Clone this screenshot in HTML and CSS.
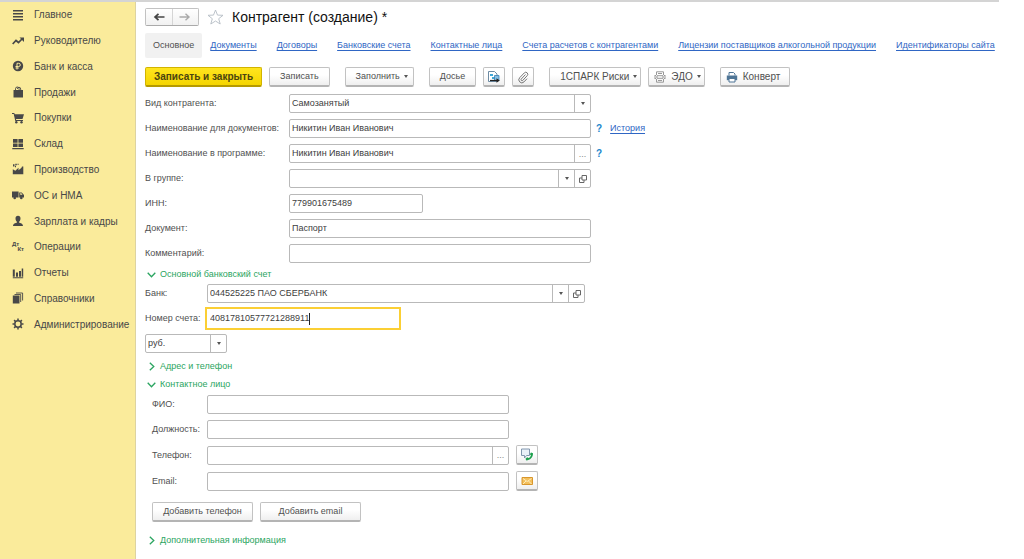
FILE: index.html
```html
<!DOCTYPE html>
<html lang="ru">
<head>
<meta charset="utf-8">
<title>Контрагент (создание)</title>
<link rel="stylesheet" href="styles.css">
</head>
<body>
<svg class="defs" aria-hidden="true">
  <symbol id="open" viewBox="0 0 8 8"><path d="M3 .5h4.500v4.500H3zM3 3H.5v4.500H5V5" fill="none" stroke="#666"/></symbol>
  <symbol id="down" viewBox="0 0 9 6"><path d="M.7.8l3.800 4 3.800-4" fill="none" stroke="#2ba561" stroke-width="1.300"/></symbol>
  <symbol id="right" viewBox="0 0 6 9"><path d="M.8.7l4 3.800-4 3.800" fill="none" stroke="#2ba561" stroke-width="1.300"/></symbol>
</svg>
<div class="topline"></div>
<div class="app">
  <nav class="side">
    <ul class="menu">
      <li><a href="#"><svg viewBox="0 0 12 12"><path d="M1 1h10v1.500H1zM1 4h10v1.500H1zM1 7h10v1.500H1zM1 10h10v1.500H1z"/></svg>Главное</a></li>
      <li><a href="#"><svg viewBox="0 0 12 12"><path d="M.7 9L4 5.500l2.500 2L10 4" fill="none" stroke="#484848" stroke-width="1.700"/><path d="M7.500 2.500H12V7z"/></svg>Руководителю</a></li>
      <li><a href="#"><svg viewBox="0 0 12 12"><circle cx="6" cy="6" r="5.200"/><path d="M5 9.500V3.300h1.700a1.600 1.600 0 010 3.200H3.500M3.500 8h3.300" fill="none" stroke="#faeb9b" stroke-width="1"/></svg>Банк и касса</a></li>
      <li><a href="#"><svg viewBox="0 0 12 12"><path d="M1.500 4h9.500V11.500h-9.500z"/><path d="M3.500 6V2.800a1.800 1.800 0 013.600 0V6M5.300 3a1.700 1.700 0 013.400 0v3" fill="none" stroke="#484848" stroke-width=".9"/></svg>Продажи</a></li>
      <li><a href="#"><svg viewBox="0 0 12 12"><path d="M0 1h2.300l.4 1.200H12L10.500 7H4l.2 1H11v1H3.300L1.700 2H0z"/><circle cx="4.300" cy="10.300" r="1.200"/><circle cx="9.500" cy="10.300" r="1.200"/></svg>Покупки</a></li>
      <li><a href="#"><svg viewBox="0 0 12 12"><path d="M1 1h4.600v3.700H1zM6.400 1H11v3.700H6.400zM1 5.400h4.600V9H1zM6.400 5.400H11V9H6.400zM.3 10h11.400v1.300H.3z"/></svg>Склад</a></li>
      <li><a href="#"><svg viewBox="0 0 12 12"><path d="M.8 11.300V6.200l2.500 1.600 3.200-3v2.400l3-2.400L10 3.500h1.300v7.800zM1 1.200h1.500v2.300H1zM3.300.8h1.500v1.500h-1.500zM3 2.800h1v1.400H3zM5.500.8h1.200v1H5.500z"/></svg>Производство</a></li>
      <li><a href="#"><svg viewBox="0 0 12 12"><path d="M0 2.500h6.600v6H0zM7.200 3.500h2.500L12 6v2.500H7.200z"/><circle cx="2.700" cy="9" r="1.300"/><circle cx="9.300" cy="9" r="1.300"/><path d="M8.200 4.300h1.200l1.100 1.400H8.200z" fill="#faeb9b"/></svg>ОС и НМА</a></li>
      <li><a href="#"><svg viewBox="0 0 12 12"><path d="M6 .8c1.700 0 2.500 1.200 2.500 2.600C8.500 5 7.500 6.400 7 6.700v.8c1.500.6 4 .9 4 3.500H1c0-2.600 2.500-2.900 4-3.500v-.8C4.500 6.400 3.500 5 3.500 3.400 3.500 2 4.300.8 6 .8z"/></svg>Зарплата и кадры</a></li>
      <li><a href="#"><span class="dtkt"><b>Дт</b><b>Кт</b></span>Операции</a></li>
      <li><a href="#"><svg viewBox="0 0 12 12"><path d="M.8 2.500h2v7.300h-2zM4 5.500h2v4.300H4zM7 4h2v5.800H7zM9.700 1.500h1.500v8.300H9.700zM.8 10.200h10.400v1H.8z"/></svg>Отчеты</a></li>
      <li><a href="#"><svg viewBox="0 0 12 12"><path d="M.8 3.500h6.700v8H.8z"/><path d="M2.500 2.500h6.200v7.500M4 1h6.600v7.500" fill="none" stroke="#484848" stroke-width=".9"/></svg>Справочники</a></li>
      <li><a href="#"><svg viewBox="0 0 12 12"><circle cx="6" cy="6" r="3.200" fill="none" stroke="#484848" stroke-width="1.500"/><path d="M6 .5v2M6 9.500v2M.5 6h2M9.500 6h2M2.100 2.100l1.400 1.400M8.500 8.500l1.400 1.400M2.100 9.900l1.400-1.400M8.500 3.500l1.400-1.400" stroke="#484848" stroke-width="1.500"/></svg>Администрирование</a></li>
    </ul>
  </nav>
  <main class="main">
    <header class="head">
      <div class="history">
        <button type="button" aria-label="Назад"><svg viewBox="0 0 11 8"><path d="M11 4H2M5 .8L1.500 4 5 7.200" fill="none" stroke="#444" stroke-width="1.700"/></svg></button>
        <button type="button" aria-label="Вперед"><svg viewBox="0 0 11 8"><path d="M0 4h9M6 .8L9.500 4 6 7.200" fill="none" stroke="#aaa" stroke-width="1.400"/></svg></button>
      </div>
      <svg class="star" viewBox="0 0 17 16"><path d="M8.500 1l2 5.100 5.500.2-4.300 3.400 1.500 5.300-4.700-3-4.700 3 1.500-5.300L1 6.300l5.500-.2z" fill="none" stroke="#b4bcc4" stroke-width=".9"/></svg>
      <h1>Контрагент (создание) *</h1>
    </header>
    <nav class="tabs">
      <span class="current">Основное</span>
      <a href="#">Документы</a>
      <a href="#">Договоры</a>
      <a href="#">Банковские счета</a>
      <a href="#">Контактные лица</a>
      <a href="#">Счета расчетов с контрагентами</a>
      <a href="#">Лицензии поставщиков алкогольной продукции</a>
      <a href="#">Идентификаторы сайта</a>
    </nav>
    <div class="toolbar">
      <div class="group">
        <button type="button" class="btn primary">Записать и закрыть</button>
        <button type="button" class="btn">Записать</button>
      </div>
      <div class="group">
        <button type="button" class="btn drop">Заполнить<i class="caret"></i></button>
      </div>
      <div class="group">
        <button type="button" class="btn">Досье</button>
        <button type="button" class="btn icon" aria-label="Структура подчиненности"><svg viewBox="0 0 14 14"><path d="M1.500 1.500h6l2.500 2.500v7.500H1.500z" fill="#fff" stroke="#6d8ba3"/><path d="M3 4h3v2H3zM5 7h3v2H5z" fill="#3fa7d6"/><path d="M7.500 5.500h4.500v5H7.500z" fill="#86bfe4" stroke="#3a7fb0" stroke-width=".8"/><path d="M3 10.500h7" stroke="#222" stroke-width="1.200"/><path d="M9.500 8.200l3.300 2.300-3.300 2.300z" fill="#222"/></svg></button>
        <button type="button" class="btn icon" aria-label="Присоединенные файлы"><svg viewBox="0 0 14 14"><path d="M9.500 4.500L5.300 9a1 1 0 001.500 1.400l4.400-4.700a2 2 0 00-2.900-2.800L3.700 7.700a3 3 0 004.300 4.200l3-3.200" fill="none" stroke="#777" stroke-width="1"/></svg></button>
      </div>
      <div class="group">
        <button type="button" class="btn drop large">1СПАРК Риски<i class="caret"></i></button>
        <button type="button" class="btn pic drop large"><svg viewBox="0 0 12 12"><path d="M2.500 4V.8h7V4M2.500 8v3.200h7V8M0 6h2.500M9.500 6H12M3 4.700h6v2.600H3zM4 2.500h4M4 9.500h4M.5 4.500h1.500M10 4.500h1.500M.5 7.500h1.500M10 7.500h1.500" fill="none" stroke="#999"/></svg>ЭДО<i class="caret"></i></button>
      </div>
      <div class="group">
        <button type="button" class="btn pic large"><svg viewBox="0 0 12 12"><path d="M3 4.500v-3h4.500L9 3v1.500" fill="#fff" stroke="#4f7596"/><path d="M.8 4.500h10.400v4.700H.8z" fill="#4f7596"/><path d="M3 7.500h6v3.500H3z" fill="#fff" stroke="#4f7596"/></svg>Конверт</button>
      </div>
    </div>
    <form class="form">
      <div class="row">
        <label for="kind">Вид контрагента:</label>
        <div class="field combo"><select id="kind"><option>Самозанятый</option></select><span class="cell arrow"><i class="caret"></i></span></div>
      </div>
      <div class="row">
        <label for="docname">Наименование для документов:</label>
        <div class="field"><input id="docname" type="text" value="Никитин Иван Иванович"></div>
        <div class="extra"><button type="button" class="help">?</button><a href="#">История</a></div>
      </div>
      <div class="row">
        <label for="progname">Наименование в программе:</label>
        <div class="field"><input id="progname" type="text" value="Никитин Иван Иванович"><button type="button" class="cell dots">...</button></div>
        <div class="extra"><button type="button" class="help">?</button></div>
      </div>
      <div class="row">
        <label for="parent">В группе:</label>
        <div class="field"><input id="parent" type="text"><button type="button" class="cell" aria-label="Выбрать группу"><i class="caret"></i></button><button type="button" class="cell" aria-label="Открыть группу"><svg><use href="#open"/></svg></button></div>
      </div>
      <div class="row">
        <label for="inn">ИНН:</label>
        <div class="field short"><input id="inn" type="text" value="779901675489"></div>
      </div>
      <div class="row">
        <label for="doc">Документ:</label>
        <div class="field"><input id="doc" type="text" value="Паспорт"></div>
      </div>
      <div class="row">
        <label for="comment">Комментарий:</label>
        <div class="field"><input id="comment" type="text"></div>
      </div>

      <button type="button" class="section first"><svg class="v"><use href="#down"/></svg>Основной банковский счет</button>
      <div class="row bank">
        <label for="bank">Банк:</label>
        <div class="field"><input id="bank" type="text" value="044525225 ПАО СБЕРБАНК"><button type="button" class="cell" aria-label="Выбрать банк"><i class="caret"></i></button><button type="button" class="cell" aria-label="Открыть банк"><svg><use href="#open"/></svg></button></div>
      </div>
      <div class="row bank">
        <label for="account">Номер счета:</label>
        <div class="field active"><input id="account" type="text" value="40817810577721288911"><span class="cursor"></span></div>
      </div>
      <div class="row currency">
        <div class="field combo"><select aria-label="Валюта"><option>руб.</option></select><span class="cell arrow"><i class="caret"></i></span></div>
      </div>

      <button type="button" class="section"><svg class="h"><use href="#right"/></svg>Адрес и телефон</button>
      <button type="button" class="section"><svg class="v"><use href="#down"/></svg>Контактное лицо</button>
      <div class="contact">
        <div class="row">
          <label for="fio">ФИО:</label>
          <div class="field"><input id="fio" type="text"></div>
        </div>
        <div class="row">
          <label for="post">Должность:</label>
          <div class="field"><input id="post" type="text"></div>
        </div>
        <div class="row tall">
          <label for="phone">Телефон:</label>
          <div class="field"><input id="phone" type="text"><button type="button" class="cell dots">...</button></div>
          <button type="button" class="btn icon" aria-label="Позвонить"><svg viewBox="0 0 14 14"><path d="M1.500 1h8v6.500H6.500L4.500 10V7.500h-3z" fill="#eaf1f8" stroke="#8096ad"/><path d="M11 4.500l2 .8c.3 3.700-3 7.200-6.700 7.200l-.8-1.700 1.700-1.500 1.300.8c1.200-.6 2-1.600 2.400-2.900L9.800 6.300z" fill="#1ea04e"/></svg></button>
        </div>
        <div class="row tall">
          <label for="email">Email:</label>
          <div class="field"><input id="email" type="email"></div>
          <button type="button" class="btn icon" aria-label="Написать письмо"><svg viewBox="0 0 14 14"><path d="M2 3.500h10.500v7H2z" fill="#f3bf5c" stroke="#d8962c"/><path d="M3 4.500l4.200 3 4.300-3M3 10l3-3M11.500 10l-3-3" fill="none" stroke="#fff0c4" stroke-width=".9"/></svg></button>
        </div>
        <div class="adds">
          <button type="button" class="btn">Добавить телефон</button>
          <button type="button" class="btn">Добавить email</button>
        </div>
      </div>
      <button type="button" class="section"><svg class="h"><use href="#right"/></svg>Дополнительная информация</button>
    </form>
  </main>
</div>
</body>
</html>
```
FILE: styles.css
```css
* { box-sizing: border-box; }

body {
  margin: 0;
  min-height: 100vh;
  display: flex;
  flex-direction: column;
  background: #fff;
  color: #505050;
  font: 9px/13px "Liberation Sans", Arial, sans-serif;
}

button, input, select { font: inherit; color: inherit; margin: 0; }
button { cursor: pointer; }
.defs { display: none; }

.topline { height: 2px; margin-right: 25px; background: #d4d4d4; }

.app { flex: 1; display: flex; }

/* sections panel */
.side {
  flex: 0 0 136px;
  background: #faeb9b;
  border-right: 1px solid #ddd3a0;
}
.menu {
  list-style: none;
  margin: 0;
  padding: 0;
  height: 335px;
  display: grid;
  grid-auto-rows: 1fr;
}
.menu li { display: grid; }
.menu a {
  display: flex;
  align-items: center;
  gap: 10px;
  padding-left: 12px;
  color: #484848;
  font-size: 10px;
  text-decoration: none;
  white-space: nowrap;
}
.menu svg { width: 12px; height: 12px; fill: #484848; }
.dtkt {
  width: 12px;
  display: flex;
  flex-direction: column;
  font-size: 6px;
  line-height: 5px;
}
.dtkt b:last-child { align-self: flex-end; }

/* form header */
.main { flex: 1; min-width: 0; padding: 5px 8px 8px 9px; }
.head { display: flex; align-items: center; height: 20px; }
.history { display: flex; width: 54px; height: 18px; border: 1px solid #c2c2c2; border-bottom-color: #aaa; border-radius: 2px; }
.history button {
  flex: 1;
  display: grid;
  place-items: center;
  padding: 0;
  border: 0;
  background: linear-gradient(#fff, #f1f1f1);
}
.history button + button { border-left: 1px solid #d5d5d5; }
.history svg { width: 12px; height: 8px; }
.star { width: 17px; height: 16px; margin: 0 8px; }
h1 { margin: 0; font-size: 14px; line-height: 20px; font-weight: 400; color: #111; white-space: nowrap; }

.tabs { display: flex; align-items: center; gap: 20px; margin-top: 6px; height: 25px; white-space: nowrap; }
.current { padding: 0 8px; line-height: 25px; margin-right: -12px; background: #f1f1f1; border-radius: 2px; }
.tabs a, .extra a { color: #2f66c4; text-decoration: underline; text-underline-offset: 2px; text-decoration-thickness: 1px; }

/* command bar */
.toolbar { display: flex; gap: 15px; margin-top: 9px; }
.group { display: flex; gap: 7px; }
.btn {
  height: 20px;
  display: flex;
  align-items: center;
  justify-content: center;
  padding: 0 10px;
  border: 1px solid #c2c2c2;
  border-bottom: 2px solid #b4b4b4;
  border-radius: 2px;
  background: linear-gradient(#fff 40%, #efefef);
  white-space: nowrap;
}
.btn.primary {
  padding: 0 8px;
  border-color: #d2b400;
  border-bottom-color: #b59a00;
  background: linear-gradient(#ffe51f, #f5d500);
  font-size: 10px;
  font-weight: 700;
  color: #4b4410;
}
.btn.large { font-size: 10px; }
.btn.drop { padding-right: 5px; }
.btn.drop.large { padding-right: 3px; }
.btn.icon { width: 22px; padding: 0; }
.btn.icon svg { width: 14px; height: 14px; }
.btn.pic { padding: 0 9px 0 5px; }
.btn.pic svg { width: 12px; height: 12px; margin-right: 5px; }
.caret { border: 2px solid transparent; border-top: 3px solid #555; border-bottom: 0; }
.btn .caret { margin-left: 4px; }

/* fields */
.form { margin-top: 4px; }
.row {
  display: grid;
  grid-template-columns: 144px minmax(0, 302px) auto;
  align-items: center;
  justify-content: start;
  height: 25px;
}
.row label { white-space: nowrap; }
.field {
  display: flex;
  height: 19px;
  border: 1px solid #b9b9b9;
  border-radius: 2px;
  background: #fff;
  color: #404040;
}
.field input, .field select {
  flex: 1;
  min-width: 0;
  width: 100%;
  padding: 0 2px;
  border: 0;
  outline: 0;
  background: none;
  appearance: none;
}
.field.short { width: 134px; }
.combo { position: relative; }
.cell {
  flex: 0 0 16px;
  display: grid;
  place-items: center;
  padding: 0;
  border: 0;
  border-left: 1px solid #b9b9b9;
  background: none;
}
.cell svg { width: 8px; height: 8px; }
.arrow { position: absolute; top: 0; right: 0; bottom: 0; width: 16px; pointer-events: none; }
.dots { color: #888; line-height: 10px; }
.extra { display: flex; gap: 8px; margin-left: 5px; }
.help { padding: 0; border: 0; background: none; color: #1c86cc; font-size: 10px; font-weight: 700; }

.section {
  display: flex;
  align-items: center;
  height: 15px;
  margin-top: 3px;
  padding: 0;
  border: 0;
  background: none;
  color: #2ba561;
  white-space: nowrap;
}
.section.first { margin-top: 0; padding-top: 2px; }
.section .v { width: 9px; height: 6px; margin: 0 4px 0 2px; }
.section .h { width: 6px; height: 9px; margin: 0 5px 0 4px; }

.bank { grid-template-columns: 62px minmax(0, 378px); }
.field.active {
  width: 196px;
  height: 23px;
  margin-left: -2px;
  padding-left: 1px;
  align-items: center;
  border: 2px solid #fbcf34;
  border-radius: 0;
}
.field.active input { flex: 0 1 auto; width: auto; field-sizing: content; padding-right: 0; caret-color: transparent; }
.cursor { width: 1px; height: 12px; background: #222; }
.currency { grid-template-columns: 82px; }
.contact { padding-left: 7px; }
.contact .row { grid-template-columns: 55px minmax(0, 302px) auto; }
.contact .row .btn { margin-left: 7px; }
.contact .tall { height: 26px; }
.adds { display: flex; gap: 7px; margin: 8px 0 11px; }
.adds .btn { width: 101px; }
```
